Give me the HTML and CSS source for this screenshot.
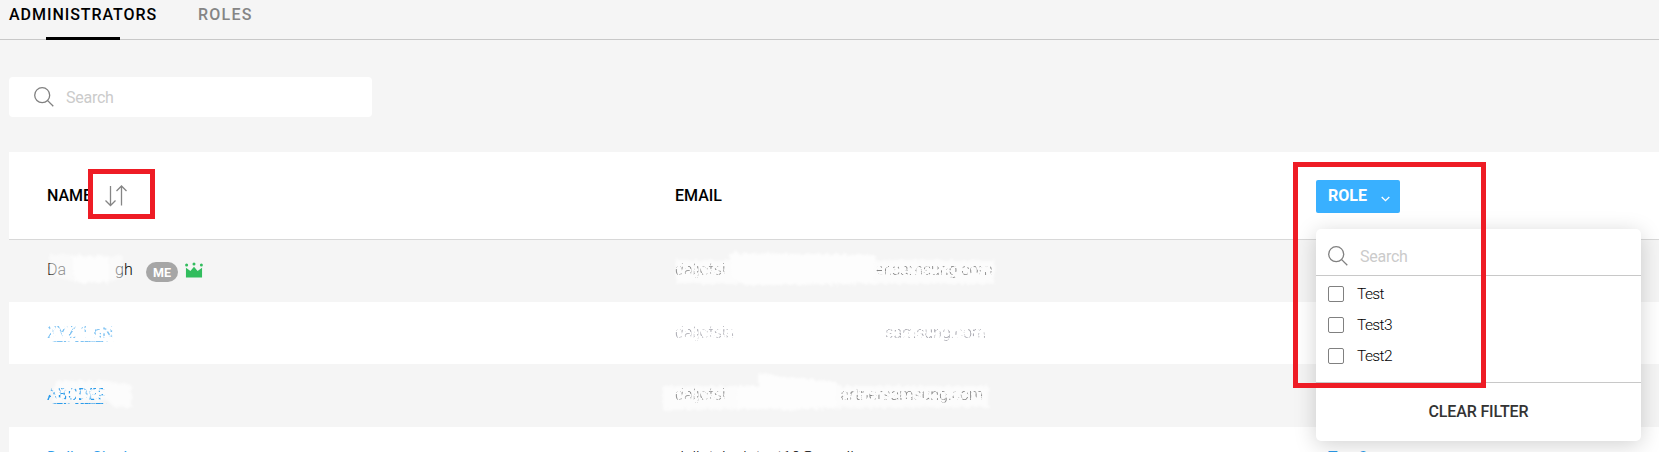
FILE: index.html
```html
<!DOCTYPE html>
<html lang="en">
<head>
<meta charset="utf-8">
<title>Administrators</title>
<link rel="stylesheet" href="styles.css">
</head>
<body>
<svg class="defs" width="0" height="0" aria-hidden="true">
  <filter id="rough" x="-5%" y="-20%" width="110%" height="140%">
    <feTurbulence type="fractalNoise" baseFrequency="0.22" numOctaves="2" seed="4" result="n"/>
    <feDisplacementMap in="SourceGraphic" in2="n" scale="6"/>
    <feGaussianBlur stdDeviation="0.9"/>
  </filter>
  <filter id="worn" x="0" y="0" width="100%" height="110%">
    <feTurbulence type="fractalNoise" baseFrequency="0.3" numOctaves="2" seed="7"/>
    <feColorMatrix values="0 0 0 0 0  0 0 0 0 0  0 0 0 0 0  7 0 0 0 -3.2" result="holes"/>
    <feComposite in="SourceGraphic" in2="holes" operator="in"/>
  </filter>
</svg>
<nav class="tabs">
  <a class="tab active"><span>ADMINISTRATORS</span></a>
  <a class="tab roles"><span>ROLES</span></a>
</nav>
<div class="search-box">
  <svg class="lens" viewBox="0 0 20 20"><circle cx="8.2" cy="8.2" r="7.5"/><path d="M13.4 13.4L19.3 19.3"/></svg>
  <span class="placeholder">Search</span>
</div>
<main class="table">
  <div class="row head">
    <div class="cell name-head"><span class="th-name">NAME</span>
      <svg class="sort" viewBox="0 0 22 22"><path d="M5.5 1V20.5M.5 15.5L5.5 20.5L10.5 15.5M16.5 20.5V1M11.5 6L16.5 1L21.5 6"/></svg>
      <i class="mark sort-mark"></i>
    </div>
    <div class="cell"><span class="th-email">EMAIL</span></div>
    <div class="cell role-cell">
      <button class="role-button"><span>ROLE</span><svg viewBox="0 0 10 6"><path d="M.8.8L5 4.8L9.2.8"/></svg></button>
      <section class="menu">
        <div class="menu-search">
          <svg class="lens" viewBox="0 0 20 20"><circle cx="8.2" cy="8.2" r="7.5"/><path d="M13.4 13.4L19.3 19.3"/></svg>
          <span class="placeholder">Search</span>
        </div>
        <div class="options">
          <label class="option"><i class="check"></i><span>Test</span></label>
          <label class="option"><i class="check"></i><span>Test3</span></label>
          <label class="option"><i class="check"></i><span>Test2</span></label>
        </div>
        <div class="clear"><span>CLEAR FILTER</span></div>
      </section>
      <i class="mark role-mark"></i>
    </div>
  </div>
  <div class="row first">
    <div class="cell"><span class="first-name">Da<span class="gap"></span>gh</span><span class="me">ME</span>
      <svg class="crown" viewBox="0 0 19 16"><path d="M1 16V5.5L5.7 9L9.5 4.5L13.3 9L18 5.5V16Z"/><circle cx="1.7" cy="2.7" r="1.6"/><circle cx="9.5" cy="1.7" r="1.6"/><circle cx="17.3" cy="2.7" r="1.6"/></svg>
      <svg class="smudge" viewBox="0 0 340 62"><path opacity=".55" d="M3 14L76 16V38L60 43L30 43L3 34Z"/><path d="M24 17H62V42H28Z"/></svg>
    </div>
    <div class="cell"><svg class="smudge" viewBox="0 0 340 62"><path opacity=".75" d="M1 20L320 20V44H1Z"/><path d="M55 13L200 15V44L70 45L55 36Z"/></svg>
      <span class="mail worn">daljotsi<span class="gap g1"></span>er.samsung.com</span>
    </div>
    <div class="cell"></div>
  </div>
  <div class="row">
    <div class="cell"><a class="link faded worn">XYZ 1 nN</a></div>
    <div class="cell"><span class="mail pale worn">daljotsin<span class="gap g2"></span>samsung.com</span></div>
    <div class="cell"></div>
  </div>
  <div class="row tall">
    <div class="cell"><svg class="smudge" viewBox="0 0 340 62"><path opacity=".75" d="M9 17L60 17L85 21V43L68 44L60 36L5 37Z"/></svg>
      <a class="link worn">ABCDEF</a>
    </div>
    <div class="cell"><svg class="smudge wide" viewBox="-15 0 340 62"><path opacity=".75" d="M-12 22L314 22V43L-12 46Z"/><path d="M83 9L110 13L162 18V43L115 46L61 43V22H83Z"/></svg>
      <span class="mail worn">daljotsi<span class="gap g3"></span>artnersamsung.com</span>
    </div>
    <div class="cell"></div>
  </div>
  <div class="row">
    <div class="cell"><a class="link">Daljot Singh</a></div>
    <div class="cell"><span class="mail">daljotsingh.test10@gmail</span></div>
    <div class="cell"><a class="link role-link">Test2</a></div>
  </div>
</main>
</body>
</html>
```

FILE: styles.css
```css
* { box-sizing: border-box; }
body { margin: 0; height: 452px; overflow: hidden; background: #f5f5f5; color: #000; font: 400 16px/20px Roboto, "Noto Sans", sans-serif; }
.defs { position: absolute; }
.tabs { display: flex; gap: 42px; height: 40px; padding: 5px 0 0 9px; border-bottom: 1px solid #c8c8c8; }
.tab { position: relative; font-weight: 500; letter-spacing: 1.25px; }
.tab.active::after { content: ""; position: absolute; left: 37px; bottom: -1px; width: 74px; height: 3px; background: #000; }
.tab.active { width: 147px; white-space: nowrap; letter-spacing: .95px; }
.tab.roles { color: #858585; }
.search-box { display: flex; align-items: center; width: 363px; height: 40px; margin: 37px 0 35px 9px; padding-left: 25px; border-radius: 4px; background: #fff; }
.lens { width: 20px; height: 20px; fill: none; stroke: #808080; stroke-width: 1.3; flex: none; }
.placeholder { margin: 2px 0 0 12px; color: #cbcbcb; font-weight: 400; letter-spacing: -.25px; }
.table { margin-left: 9px; }
.row { display: grid; grid-template-columns: 628px 641px 1fr; height: 62px; padding-left: 38px; background: #fff; }
.row.first, .row.tall { background: #f5f5f5; }
.row.tall { height: 63px; }
.cell { position: relative; display: flex; align-items: flex-start; padding-top: 21px; white-space: nowrap; }
.head { height: 88px; border-bottom: 1px solid #d8d8d8; font-weight: 500; }
.head .cell { padding-top: 33px; }
.th-name, .th-email { padding-top: 1px; }
.name-head { gap: 14px; }
.th-name { width: 44px; }
.sort { width: 22px; height: 22px; fill: none; stroke: #858585; stroke-width: 1.3; }
.mark { position: absolute; border: 5px solid #ee1c25; }
.sort-mark { left: 41px; top: 17px; width: 67px; height: 50px; }
.head .role-cell { padding-top: 28px; }
.role-button { display: flex; align-items: center; gap: 14px; width: 84px; height: 33px; padding: 0 0 1px 12px; border: 0; border-radius: 2px; background: #39b0ff; color: #fff; font: 700 16px/20px Roboto, sans-serif; }
.role-button svg { width: 9px; height: 6px; fill: none; stroke: #fff; stroke-width: 1.5; margin-top: 5px; }
.menu { position: absolute; z-index: 2; left: 0; top: 77px; width: 325px; height: 212px; border-radius: 5px; background: #fff; box-shadow: 0 4px 22px rgba(0,0,0,.18); font-weight: 400; }
.menu-search { display: flex; align-items: center; height: 47px; padding: 7px 0 0 12px; border-bottom: 1px solid #c8c8c8; }
.options { height: 107px; padding: 10px 0 0 12px; border-bottom: 1px solid #c8c8c8; }
.option { display: flex; gap: 13px; align-items: flex-start; height: 31px; font-size: 15.5px; font-weight: 300; line-height: 17px; letter-spacing: -.6px; color: #000; }
.check { width: 16px; height: 16px; border: 1px solid #808080; border-radius: 2px; }
.clear { padding-top: 19px; text-align: center; font-weight: 500; letter-spacing: -.15px; color: #333; }
.role-mark { z-index: 3; left: -23px; top: 10px; width: 193px; height: 226px; }
.first .cell { padding-top: 20px; }
.first-name { width: 87px; font-weight: 300; }
.gap { display: inline-block; width: 49px; }
.me { width: 32px; height: 20px; margin: 2px 0 0 12px; border-radius: 10px; background: #a6a6a6; color: #fff; font-size: 12.5px; font-weight: 700; line-height: 21px; text-align: center; }
.crown { width: 18px; height: 16px; margin: 2px 0 0 7px; fill: #32bd5e; }
.smudge { position: absolute; left: 0; top: 0; width: 340px; height: 62px; fill: #fdfdfd; filter: url(#rough); }
.smudge.wide { left: -15px; }
.worn { position: relative; filter: url(#worn); color: #888; }
.mail { font-weight: 300; }
.g1 { width: 150px; }
.pale { color: #a5a5ad; }
.g2 { width: 151px; }
.g3 { width: 115px; }
.link { color: #2b9bea; text-decoration: underline; text-underline-offset: 3px; text-decoration-thickness: 1px; }
.faded { opacity: .6; }
.role-link { margin-left: 12px; }
```
